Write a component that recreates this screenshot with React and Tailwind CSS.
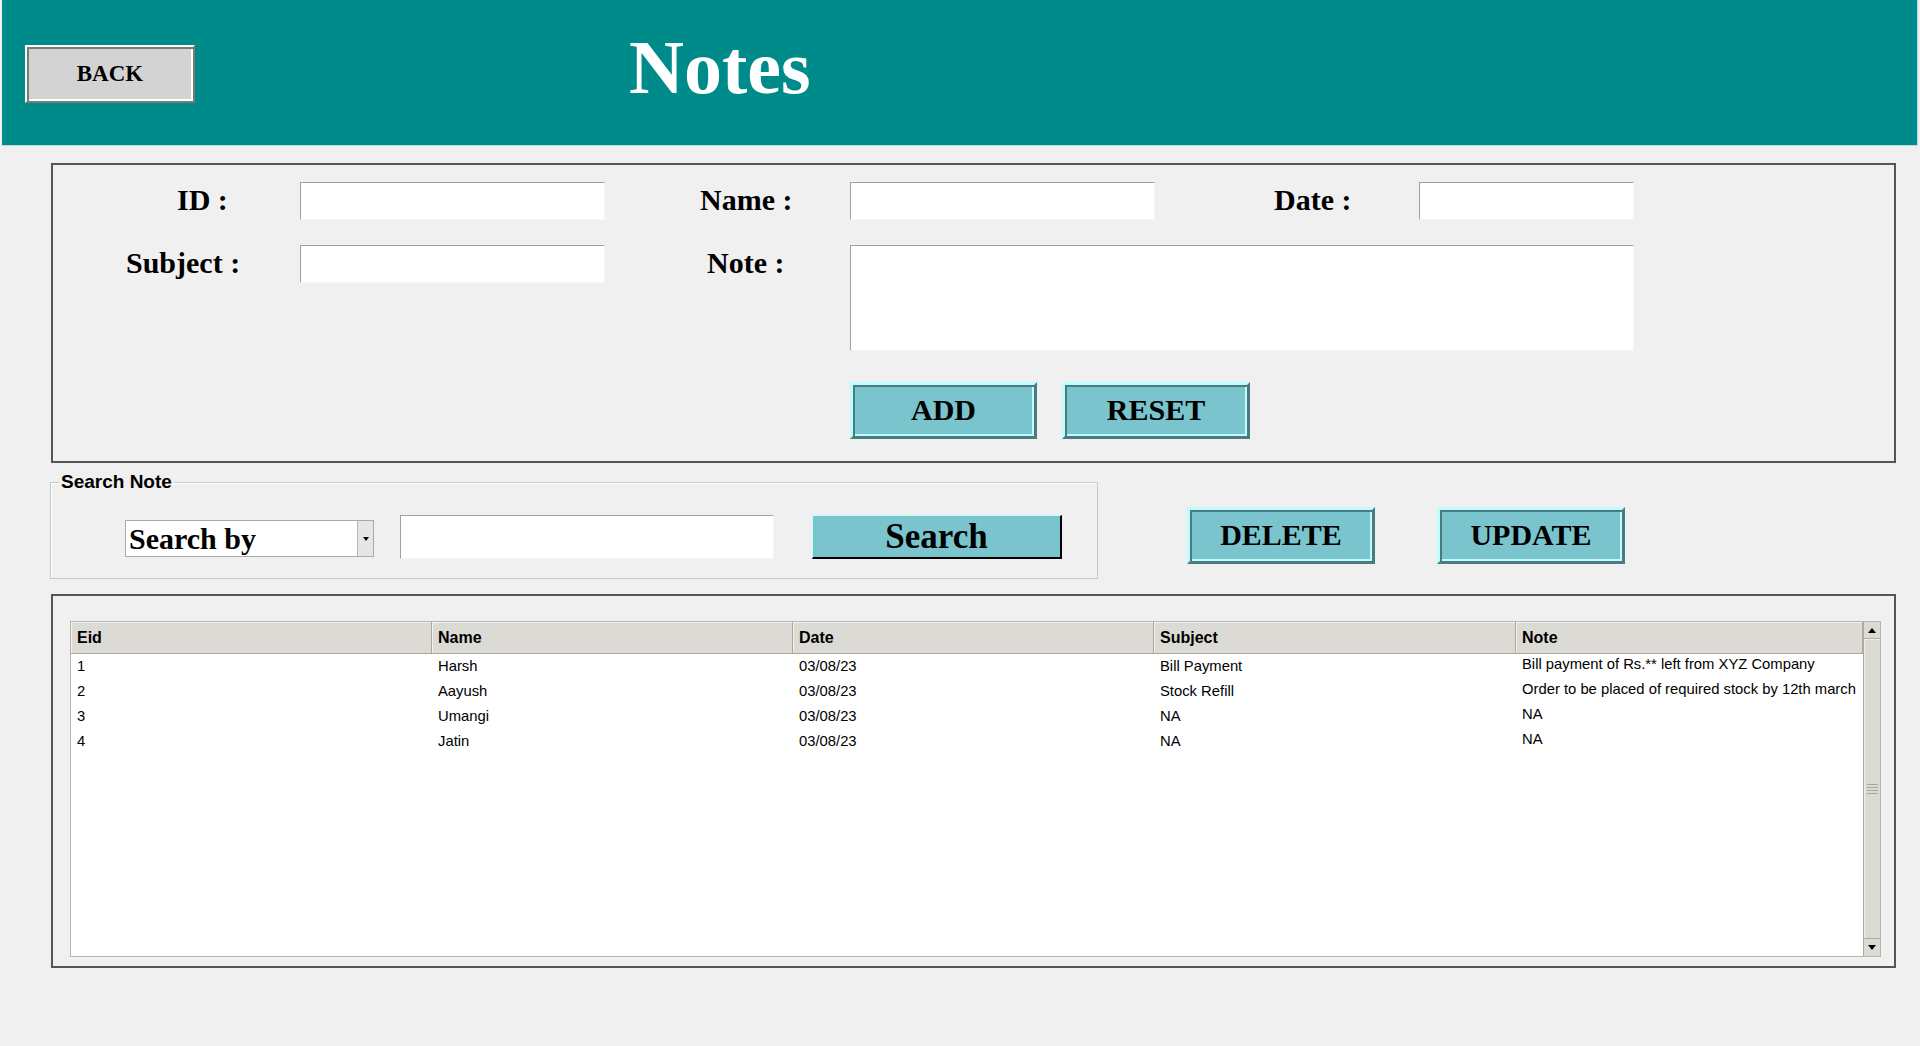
import React from 'react';

const rows = [
  ['1', 'Harsh', '03/08/23', 'Bill Payment', 'Bill payment of Rs.** left from XYZ Company'],
  ['2', 'Aayush', '03/08/23', 'Stock Refill', 'Order to be placed of required stock by 12th march'],
  ['3', 'Umangi', '03/08/23', 'NA', 'NA'],
  ['4', 'Jatin', '03/08/23', 'NA', 'NA'],
];

const columns = ['Eid', 'Name', 'Date', 'Subject', 'Note'];

const entry =
  'block bg-white border border-t-[#a0a0a0] border-l-[#a0a0a0] border-r-[#f6f6f6] border-b-[#f6f6f6] outline-none';

const label = "font-['Liberation_Serif','Times_New_Roman',serif] font-bold text-[30px] leading-none text-black whitespace-nowrap";

const TealButton = ({ children, className = '' }) => (
  <button
    className={`flex items-center justify-center h-[57px] pb-[2px] bg-[#7ac5cd] border-[3px] border-t-[#bdfcff] border-l-[#bdfcff] border-r-[#4c7a7e] border-b-[#4c7a7e] shadow-[inset_2px_2px_0_#4c7a7e,inset_-2px_-2px_0_#bdfcff] font-['Liberation_Serif','Times_New_Roman',serif] font-bold text-[30px] leading-none text-black ${className}`}
  >
    {children}
  </button>
);

const Triangle = ({ up }) => (
  <svg width="8" height="5" viewBox="0 0 8 5">
    {up ? <polygon points="0,5 8,5 4,0" fill="#000" /> : <polygon points="0,0 8,0 4,5" fill="#000" />}
  </svg>
);

const Scrollbar = () => (
  <div className="w-[17px] flex flex-col bg-[#dcdad5] border-l border-[#b0aca4]">
    <div className="h-[17px] flex items-center justify-center border-b border-[#b0aca4]">
      <Triangle up />
    </div>
    <div className="flex-1 flex flex-col items-center justify-center border-b border-[#b0aca4] shadow-[inset_1px_1px_0_#eeede9]">
      <div className="w-[11px] flex flex-col gap-[2px]">
        <div className="h-px bg-[#a8a49c]" />
        <div className="h-px bg-[#a8a49c]" />
        <div className="h-px bg-[#a8a49c]" />
        <div className="h-px bg-[#a8a49c]" />
      </div>
    </div>
    <div className="h-[17px] flex items-center justify-center">
      <Triangle />
    </div>
  </div>
);

const App = () => (
  <div className="w-[1920px] h-[1046px] bg-[#f0f0f0] overflow-hidden">
    {/* header */}
    <div className="ml-[2px] w-[1916px] h-[146px] bg-[#008b8b] border-b border-r border-[#b3dcdc] flex items-start">
      <button className="mt-[45px] ml-[23px] w-[170px] h-[58px] pb-[2px] bg-[#d3d3d3] border-2 border-t-white border-l-white border-r-[#7a7a7a] border-b-[#7a7a7a] shadow-[inset_2px_2px_0_#7a7a7a,inset_-2px_-2px_0_#ffffff] font-['Liberation_Serif','Times_New_Roman',serif] font-bold text-[23px] leading-none text-black">
        BACK
      </button>
      <h1 className="ml-[434px] mt-[29px] font-['Liberation_Serif','Times_New_Roman',serif] font-bold text-[76px] leading-none text-white">
        Notes
      </h1>
    </div>

    {/* entry form */}
    <div className="mt-[17px] ml-[51px] w-[1845px] h-[300px] border-2 border-[#555555]">
      <div className="flex items-center mt-[17px] h-[38px]">
        <div className="w-[247px] pl-[124px] pb-[2px]">
          <span className={label}>ID :</span>
        </div>
        <input className={`${entry} w-[305px] h-[38px]`} />
        <div className="w-[245px] pl-[95px] pb-[2px]">
          <span className={label}>Name :</span>
        </div>
        <input className={`${entry} w-[305px] h-[38px]`} />
        <div className="w-[264px] pl-[119px] pb-[2px]">
          <span className={label}>Date :</span>
        </div>
        <input className={`${entry} w-[215px] h-[38px]`} />
      </div>
      <div className="flex items-start mt-[25px]">
        <div className="w-[247px] h-[38px] pb-[2px] flex items-center pl-[73px]">
          <span className={label}>Subject :</span>
        </div>
        <input className={`${entry} w-[305px] h-[38px]`} />
        <div className="w-[245px] h-[38px] pb-[2px] flex items-center pl-[102px]">
          <span className={label}>Note :</span>
        </div>
        <textarea className={`${entry} w-[784px] h-[106px] resize-none`} />
      </div>
      <div className="flex mt-[31px] ml-[797px] gap-[25px]">
        <TealButton className="w-[187px]">ADD</TealButton>
        <TealButton className="w-[188px]">RESET</TealButton>
      </div>
    </div>

    {/* search row */}
    <div className="flex items-start mt-[19px]">
      <div className="relative ml-[50px] w-[1048px] h-[97px] border border-[#c8c8c8] shadow-[inset_1px_1px_0_#ffffff]">
        <span className="absolute left-[8px] -top-[12px] px-[2px] bg-[#f0f0f0] font-['Liberation_Sans',Arial,sans-serif] font-bold text-[19px] leading-[22px] text-black whitespace-nowrap">
          Search Note
        </span>
        <div className="flex items-start pt-[32px] pl-[74px]">
          <div className="mt-[5px] w-[249px] h-[37px] flex bg-white border border-[#a9a9a9]">
            <div className="flex-1 flex items-center pl-[3px] font-['Liberation_Serif','Times_New_Roman',serif] font-bold text-[30px] leading-none text-black whitespace-nowrap">
              Search by
            </div>
            <div className="w-[16px] flex items-center justify-center bg-[#e6e6e6] border-l border-[#b5b5b5]">
              <svg width="6" height="4" viewBox="0 0 6 4">
                <polygon points="0,0 6,0 3,4" fill="#000" />
              </svg>
            </div>
          </div>
          <input className={`${entry} ml-[26px] w-[374px] h-[44px]`} />
          <button className="ml-[38px] w-[250px] h-[44px] flex items-center justify-center bg-[#7ac5cd] border border-t-[#bdfcff] border-l-[#bdfcff] border-r-[2px] border-b-[2px] border-r-black border-b-black font-['Liberation_Serif','Times_New_Roman',serif] font-bold text-[35px] leading-none text-black">
            Search
          </button>
        </div>
      </div>
      <TealButton className="ml-[89px] mt-[25px] w-[188px]">DELETE</TealButton>
      <TealButton className="ml-[62px] mt-[25px] w-[188px]">UPDATE</TealButton>
    </div>

    {/* table */}
    <div className="mt-[15px] ml-[51px] w-[1845px] h-[374px] border-2 border-[#555555] pt-[25px] pl-[17px]">
      <div className="w-[1811px] h-[336px] flex bg-white border border-[#b8b4ac]">
        <div className="flex-1 flex flex-col font-['Liberation_Sans',Arial,sans-serif] text-black">
          <div className="h-[32px] grid grid-cols-[361px_361px_361px_362px_347px] bg-[#dcdad5]">
            {columns.map((c) => (
              <div
                key={c}
                className="flex items-center pl-[6px] border-r border-b border-[#aca899] shadow-[inset_1px_1px_0_#f3f2ef] text-[16px] font-bold"
              >
                {c}
              </div>
            ))}
          </div>
          {rows.map((r) => (
            <div key={r[0]} className="h-[25px] grid grid-cols-[361px_361px_361px_362px_347px] text-[14.8px]">
              {r.map((v, i) => (
                <div
                  key={i}
                  className={`flex items-center pl-[6px] whitespace-nowrap overflow-hidden ${i === 4 ? 'pb-[5px]' : ''}`}
                >
                  {v}
                </div>
              ))}
            </div>
          ))}
        </div>
        <Scrollbar />
      </div>
    </div>
  </div>
);

export default App;
